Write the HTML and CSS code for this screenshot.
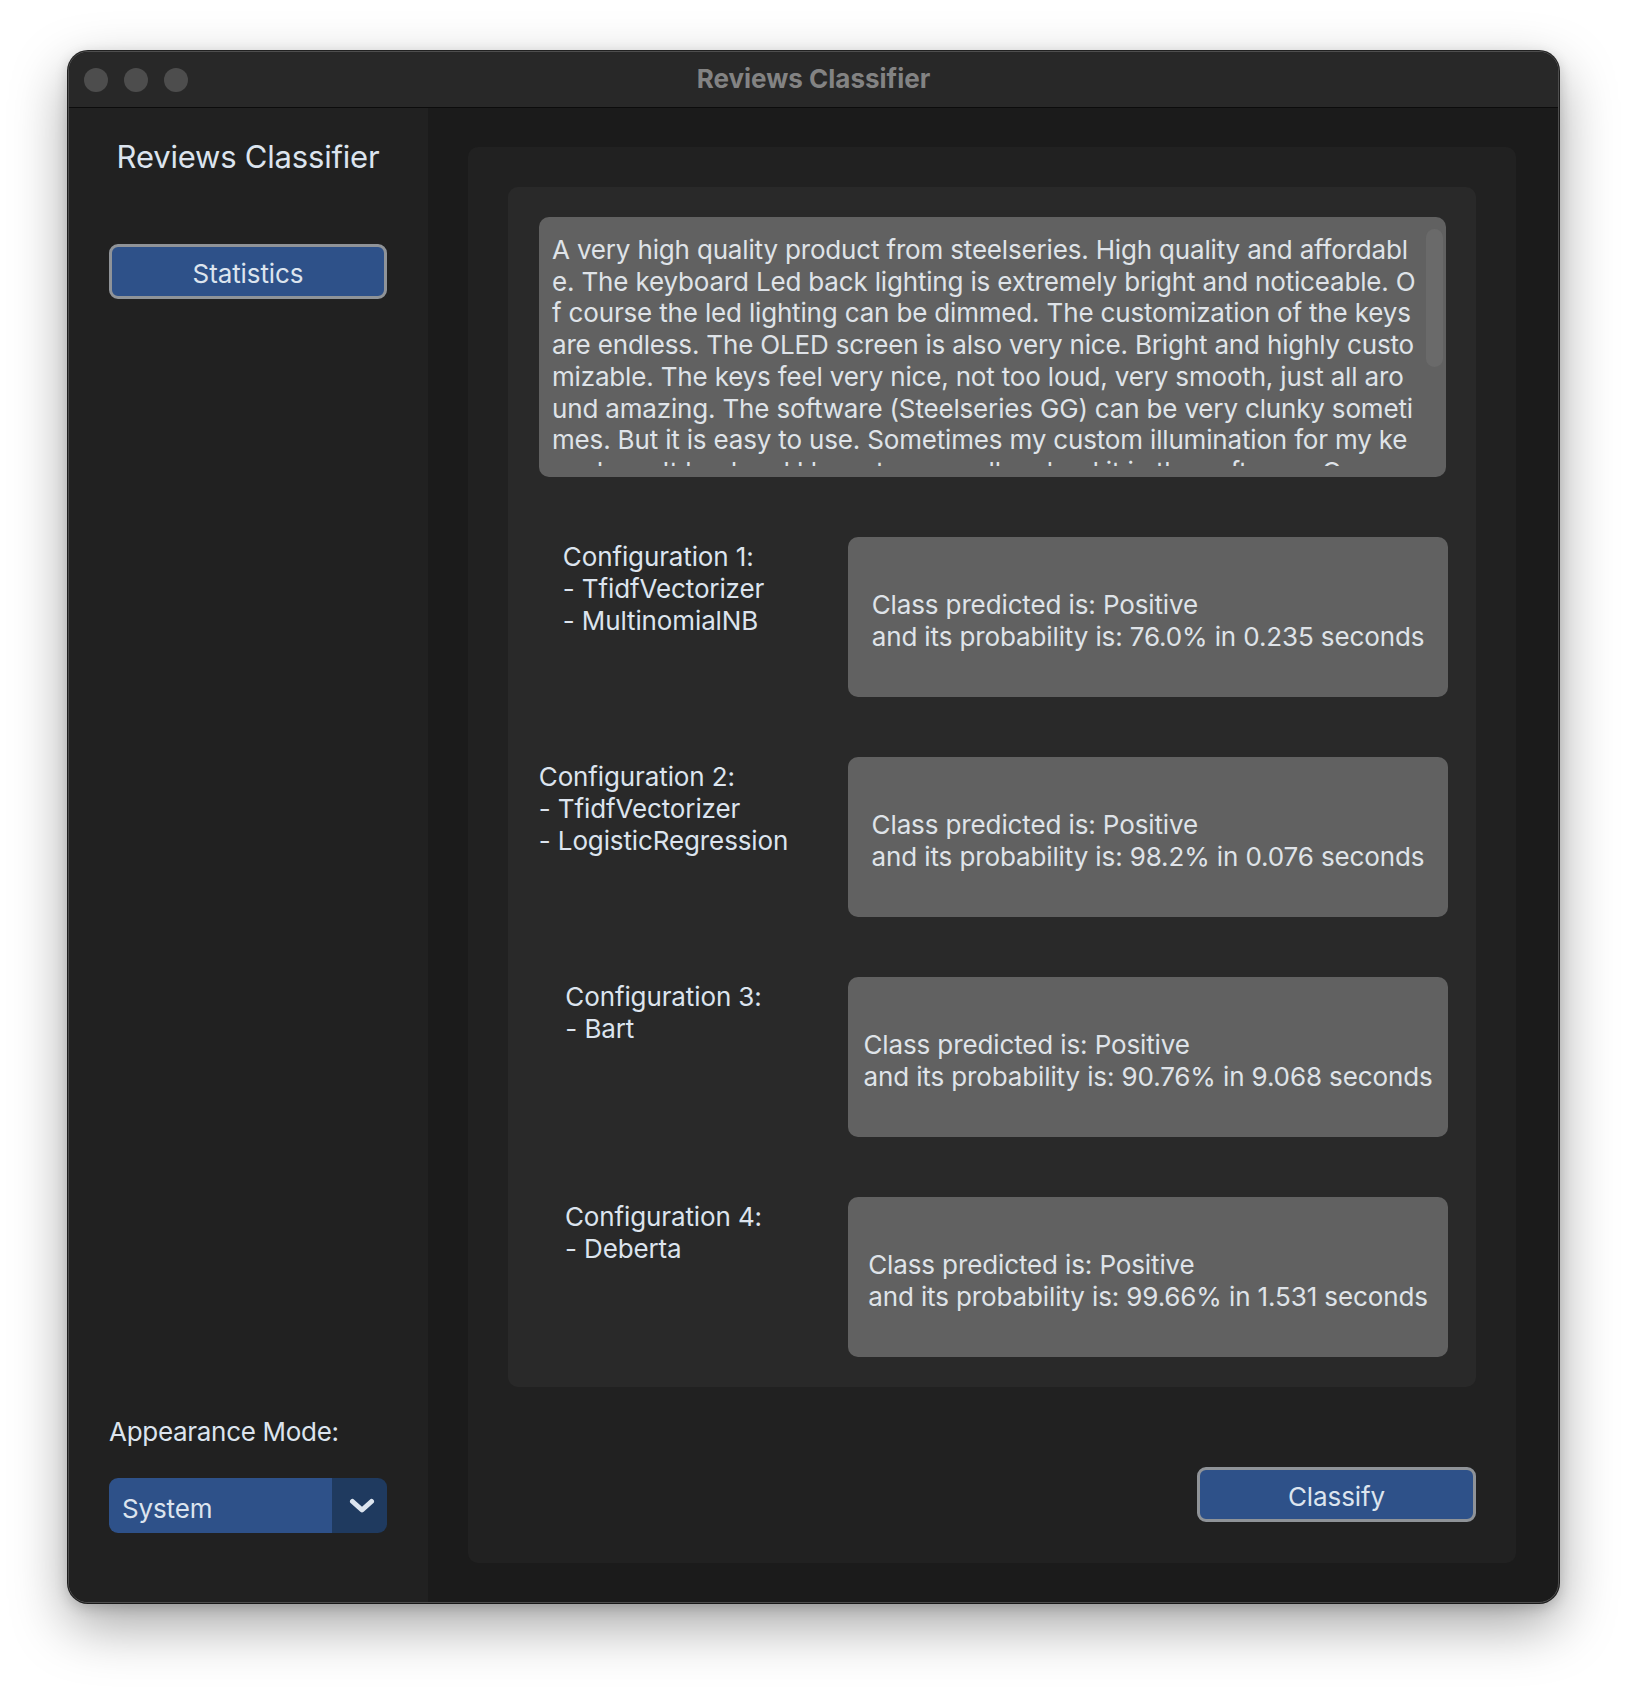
FILE: index.html
```html
<!DOCTYPE html>
<html lang="en">
<head>
<meta charset="utf-8">
<title>Reviews Classifier</title>
<link rel="stylesheet" href="styles.css">
</head>
<body>
<div class="window">
  <div class="titlebar">
    <div class="lights"><span class="light"></span><span class="light"></span><span class="light"></span></div>
    <div class="wtitle">Reviews Classifier</div>
    <div class="tb-spacer"></div>
  </div>
  <div class="content">
    <aside class="sidebar">
      <div class="logo">Reviews Classifier</div>
      <button class="btn btn-stats">Statistics</button>
      <div class="spacer"></div>
      <div class="mode-label">Appearance Mode:</div>
      <div class="optmenu">
        <span class="opt-value">System</span>
        <span class="opt-arrow"><svg class="chev" width="26" height="16" viewBox="0 0 26 16"><polyline points="3.5,3.5 13,12 22.5,3.5" fill="none" stroke="#dce4ee" stroke-width="5" stroke-linecap="round" stroke-linejoin="round"/></svg></span>
      </div>
    </aside>
    <main class="main">
      <div class="outer">
        <div class="inner">
          <div class="textbox">
            <div class="tb-text">
              <span class="tl">A very high quality product from steelseries. High quality and affordabl</span>
              <span class="tl">e. The keyboard Led back lighting is extremely bright and noticeable. O</span>
              <span class="tl">f course the led lighting can be dimmed. The customization of the keys</span>
              <span class="tl">are endless. The OLED screen is also very nice. Bright and highly custo</span>
              <span class="tl">mizable. The keys feel very nice, not too loud, very smooth, just all aro</span>
              <span class="tl">und amazing. The software (Steelseries GG) can be very clunky someti</span>
              <span class="tl">mes. But it is easy to use. Sometimes my custom illumination for my ke</span>
              <span class="tl">ys doesn't load and I have to manually reload it in the software. Ove</span>
            </div>
            <div class="tb-scroll"><div class="thumb"></div></div>
          </div>
          <div class="rows">
            <div class="row">
              <div class="cfg">Configuration 1:<br>- TfidfVectorizer<br>- MultinomialNB</div>
              <div class="result"><div class="result-text">Class predicted is: Positive<br>and its probability is: 76.0% in 0.235 seconds</div></div>
            </div>
            <div class="row">
              <div class="cfg">Configuration 2:<br>- TfidfVectorizer<br>- LogisticRegression</div>
              <div class="result"><div class="result-text">Class predicted is: Positive<br>and its probability is: 98.2% in 0.076 seconds</div></div>
            </div>
            <div class="row">
              <div class="cfg">Configuration 3:<br>- Bart</div>
              <div class="result"><div class="result-text">Class predicted is: Positive<br>and its probability is: 90.76% in 9.068 seconds</div></div>
            </div>
            <div class="row">
              <div class="cfg">Configuration 4:<br>- Deberta</div>
              <div class="result"><div class="result-text">Class predicted is: Positive<br>and its probability is: 99.66% in 1.531 seconds</div></div>
            </div>
          </div>
        </div>
        <div class="actions"><button class="btn btn-classify">Classify</button></div>
      </div>
    </main>
  </div>
</div>
</body>
</html>
```

FILE: styles.css
```css
* { box-sizing: border-box; }
html, body { margin: 0; }
body {
  background: #ffffff;
  width: 1626px;
  height: 1688px;
  overflow: hidden;
  padding: 51px 0 0 68px;
  font-family: Inter, "Liberation Sans", sans-serif;
  color: #dce4ee;
}
.window {
  width: 1491px;
  height: 1552px;
  border-radius: 20px;
  background: #1b1b1b;
  border: 1px solid #4e4e4e;
  box-shadow: 0 0 0 1px rgba(0,0,0,0.85), 0 22px 56px rgba(0,0,0,0.36), 0 4px 14px rgba(0,0,0,0.18);
  display: flex;
  flex-direction: column;
  overflow: hidden;
}
.titlebar {
  height: 56px;
  flex: none;
  background: #282828;
  border-bottom: 1px solid #0c0c0c;
  display: grid;
  grid-template-columns: 1fr auto 1fr;
  align-items: center;
}
.lights { display: flex; gap: 16px; padding-left: 15px; }
.light { width: 24px; height: 24px; border-radius: 50%; background: #4d4d4d; }
.wtitle { font-size: 26px; font-weight: 700; color: #838383; padding-bottom: 2px; }
.content { flex: 1; display: flex; min-height: 0; }
.sidebar {
  width: 359px;
  flex: none;
  background: #212121;
  display: flex;
  flex-direction: column;
  padding: 31px 41px 69px 40px;
}
.logo { font-size: 31px; line-height: 36px; text-align: center; color: #dce4ee; letter-spacing: -0.2px; }
.btn {
  font-family: inherit;
  font-size: 26px;
  letter-spacing: -0.1px;
  color: #dce4ee;
  background: #2e5189;
  border: 3px solid #8f9398;
  border-radius: 9px;
  height: 55px;
  padding: 3px 0 0;
  display: flex;
  align-items: center;
  justify-content: center;
}
.btn-stats { margin-top: 69px; width: 278px; }
.spacer { flex: 1; }
.mode-label { font-size: 26px; line-height: 32px; letter-spacing: -0.3px; }
.optmenu {
  margin-top: 30px;
  height: 55px;
  display: flex;
  border-radius: 9px;
  overflow: hidden;
}
.opt-value {
  flex: 1;
  background: #2e5189;
  padding: 5px 0 0 13px;
  display: flex;
  align-items: center;
  font-size: 26px;
  letter-spacing: -0.15px;
}
.opt-arrow {
  width: 55px;
  background: #1f3a5f;
  display: flex;
  align-items: center;
  justify-content: center;
  padding-left: 4px;
}
.main { flex: 1; display: flex; padding: 39px 42px 39px 40px; min-width: 0; }
.outer {
  flex: 1;
  min-width: 0;
  background: #212121;
  border-radius: 10px;
  padding: 40px;
  display: flex;
  flex-direction: column;
}
.inner {
  background: #292929;
  border-radius: 10px;
  padding: 30px 28px 30px 31px;
}
.textbox {
  width: 907px;
  height: 260px;
  background: #616161;
  border-radius: 10px;
  display: flex;
  padding: 12px 3px 11px 13px;
}
.tb-text {
  flex: 1;
  min-width: 0;
  overflow: hidden;
  padding-top: 5px;
  font-size: 26px;
  line-height: 31.7px;
  letter-spacing: -0.17px;
  white-space: nowrap;
  color: #dfe3e8;
}
.tl { display: block; }
.tb-scroll { width: 17px; flex: none; margin-left: 6px; }
.thumb { height: 138px; border-radius: 9px; background: #6a6a6a; }
.rows { margin-top: 60px; display: flex; flex-direction: column; gap: 60px; }
.row {
  display: grid;
  grid-template-columns: 249px 600px;
  column-gap: 60px;
  height: 160px;
}
.cfg {
  justify-self: center;
  text-align: left;
  white-space: nowrap;
  font-size: 26px;
  line-height: 32px;
  letter-spacing: -0.12px;
  padding-top: 4px;
}
.result {
  background: #616161;
  border-radius: 10px;
  display: flex;
  align-items: center;
  justify-content: center;
  padding-top: 7px;
}
.result-text { font-size: 26px; line-height: 32px; letter-spacing: -0.12px; text-align: left; color: #dfe3e8; white-space: nowrap; }
.actions { margin-top: 80px; display: flex; justify-content: flex-end; }
.btn-classify { width: 279px; }
```
